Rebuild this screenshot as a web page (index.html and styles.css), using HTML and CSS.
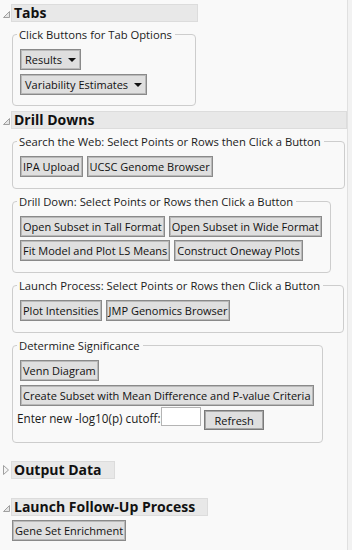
FILE: index.html
```html
<!DOCTYPE html>
<html lang="en">
<head>
<meta charset="utf-8">
<title>Drill Downs</title>
<link rel="stylesheet" href="styles.css">
</head>
<body>
<div class="page">

  <section class="outline">
    <div class="head">
      <span class="tri"><svg width="11" height="12" viewBox="0 0 11 12"><polygon points="9.5,4.5 9.5,10.5 3.5,10.5" fill="#e6e6e6" stroke="#a0a0a0" stroke-width="1"/></svg></span>
      <h2 class="bar">Tabs</h2>
    </div>
    <div class="body">
      <fieldset class="group tabs">
        <legend>Click Buttons for Tab Options</legend>
        <div class="stack">
          <button class="btn menu">Results<span class="caret"></span></button>
          <button class="btn menu">Variability Estimates<span class="caret"></span></button>
        </div>
      </fieldset>
    </div>
  </section>

  <section class="outline drill">
    <div class="head">
      <span class="tri"><svg width="11" height="12" viewBox="0 0 11 12"><polygon points="9.5,4.5 9.5,10.5 3.5,10.5" fill="#e6e6e6" stroke="#a0a0a0" stroke-width="1"/></svg></span>
      <h2 class="bar">Drill Downs</h2>
    </div>
    <div class="body">
      <fieldset class="group">
        <legend>Search the Web: Select Points or Rows then Click a Button</legend>
        <div class="row">
          <button class="btn">IPA Upload</button>
          <button class="btn">UCSC Genome Browser</button>
        </div>
      </fieldset>

      <fieldset class="group">
        <legend>Drill Down: Select Points or Rows then Click a Button</legend>
        <div class="stack tight">
          <div class="row">
            <button class="btn">Open Subset in Tall Format</button>
            <button class="btn">Open Subset in Wide Format</button>
          </div>
          <div class="row">
            <button class="btn">Fit Model and Plot LS Means</button>
            <button class="btn">Construct Oneway Plots</button>
          </div>
        </div>
      </fieldset>

      <fieldset class="group">
        <legend>Launch Process: Select Points or Rows then Click a Button</legend>
        <div class="row">
          <button class="btn">Plot Intensities</button>
          <button class="btn">JMP Genomics Browser</button>
        </div>
      </fieldset>

      <fieldset class="group sig">
        <legend>Determine Significance</legend>
        <div class="stack">
          <button class="btn">Venn Diagram</button>
          <button class="btn">Create Subset with Mean Difference and P-value Criteria</button>
        </div>
        <div class="cutoff">
          <label class="cutoff-label" for="cut">Enter new -log10(p) cutoff:</label>
          <input class="num" id="cut" type="text">
          <button class="btn refresh">Refresh</button>
        </div>
      </fieldset>
    </div>
  </section>

  <section class="outline closed">
    <div class="head">
      <span class="tri"><svg width="11" height="12" viewBox="0 0 11 12"><polygon points="3.5,1.5 8.5,6 3.5,10.5" fill="#f4f4f4" stroke="#a0a0a0" stroke-width="1"/></svg></span>
      <h2 class="bar">Output Data</h2>
    </div>
  </section>

  <section class="outline follow">
    <div class="head">
      <span class="tri"><svg width="11" height="12" viewBox="0 0 11 12"><polygon points="9.5,4.5 9.5,10.5 3.5,10.5" fill="#e6e6e6" stroke="#a0a0a0" stroke-width="1"/></svg></span>
      <h2 class="bar">Launch Follow-Up Process</h2>
    </div>
    <div class="body plain">
      <button class="btn">Gene Set Enrichment</button>
    </div>
  </section>

</div>
</body>
</html>
```

FILE: styles.css
```css
html, body {
  margin: 0;
  padding: 0;
}

body {
  background: #f2f2f2;
  font-family: "Open Sans", "Noto Sans", sans-serif;
  font-size: 11px;
  color: #1b1b1b;
}

.page {
  width: 348px;
  min-height: 550px;
  box-sizing: border-box;
  background: #f9f9f9;
  border-right: 1px solid #e0e0e0;
  padding-top: 4px;
}

.outline {
  width: fit-content;
}

.head {
  display: flex;
  align-items: stretch;
}

.tri {
  width: 11px;
  flex: none;
  display: flex;
  align-items: center;
}

.tri svg {
  display: block;
}

.bar {
  flex: 1;
  margin: 0;
  height: 18px;
  box-sizing: border-box;
  background: #e8e8e8;
  border: 1px solid #dcdcdc;
  padding: 0 12px 0 2px;
  font-size: 14px;
  font-weight: 700;
  line-height: 16px;
  color: #111;
  white-space: nowrap;
}

.body {
  padding: 0 2px 0 12px;
}

.group {
  width: fit-content;
  min-width: 0;
  margin: 5px 0 0;
  padding: 7px 8px 11px 7px;
  border: 1px solid #cdcdcd;
  border-radius: 4px;
}

.group.tabs {
  padding-bottom: 10px;
}

.group legend {
  padding: 0 3px 0 2px;
  margin: 0 12px 0 -3px;
  font-size: 11.25px;
  line-height: 15px;
  white-space: nowrap;
  color: #1b1b1b;
}

.stack {
  display: flex;
  flex-direction: column;
  align-items: flex-start;
  gap: 4px;
}

.stack.tight {
  gap: 3px;
}

.row {
  display: flex;
  gap: 4px;
}

.btn {
  font-family: inherit;
  font-size: 11px;
  color: #111;
  background: #dfdfdf;
  border: 1px solid #8a8a8a;
  box-shadow: inset 0 0 0 1px #b9b9b9;
  border-radius: 0;
  height: 21px;
  padding: 0 2px;
  line-height: 19px;
  white-space: nowrap;
  display: inline-flex;
  align-items: center;
}

.btn.menu {
  padding: 0 4px 0 4px;
}

.caret {
  display: inline-block;
  margin-left: 6px;
  width: 0;
  height: 0;
  border-left: 4px solid transparent;
  border-right: 4px solid transparent;
  border-top: 4px solid #111;
}

.sig {
  padding-bottom: 12px;
}

.cutoff {
  display: flex;
  align-items: flex-start;
  margin-top: 1px;
  margin-left: -3px;
}

.cutoff-label {
  font-size: 11.7px;
  line-height: 18px;
  padding-top: 2px;
  margin-right: 1px;
}

.num {
  width: 40px;
  height: 19px;
  box-sizing: border-box;
  border: 1px solid #b4b4b4;
  background: #fff;
  margin: 0;
  padding: 0;
}

.btn.refresh {
  margin: 3px 0 0 3px;
  height: 20px;
  padding: 0 9px;
  border-color: #7a7a7a;
  box-shadow: inset 0 0 0 1px #a8a8a8;
}

.drill {
  margin-top: 5px;
}

.closed {
  margin-top: 18px;
}

.follow {
  margin-top: 19px;
}

.body.plain {
  display: flex;
  padding: 4px 0 0 12px;
}
```
